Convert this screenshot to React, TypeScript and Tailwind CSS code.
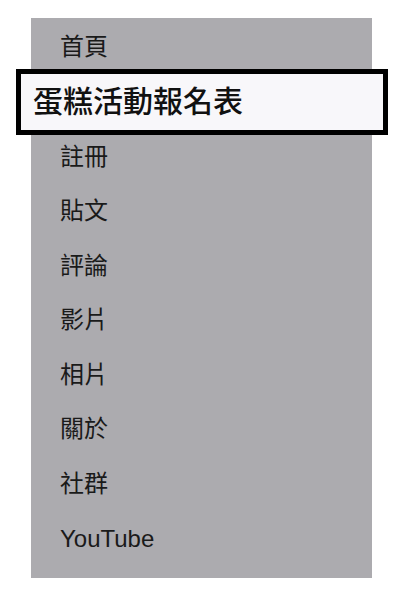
const items = ['首頁', '蛋糕活動報名表', '註冊', '貼文', '評論', '影片', '相片', '關於', '社群', 'YouTube'];
const active = 1;

export default function App() {
  return (
    <div className="w-[400px] h-[596px] bg-white pt-[18px] pl-[31px] font-['Liberation_Sans','Noto_Sans_CJK_TC',sans-serif]">
      <ul className="w-[341px] h-[560px] bg-[#acabaf] pt-[2px] flex flex-col">
        {items.map((item, i) =>
          i === active ? (
            <li
              key={item}
              className="relative z-10 h-[66px] -my-[5.7px] -ml-[15px] -mr-[16px] border-[5px] border-black bg-[#f8f7fa] pl-[12px] flex items-center text-[30px] font-medium text-[#111]"
            >
              {item}
            </li>
          ) : (
            <li key={item} className="h-[54.6px] pl-[29px] flex items-center text-[24px] text-[#1a1a1a]">
              {item}
            </li>
          )
        )}
      </ul>
    </div>
  );
}
